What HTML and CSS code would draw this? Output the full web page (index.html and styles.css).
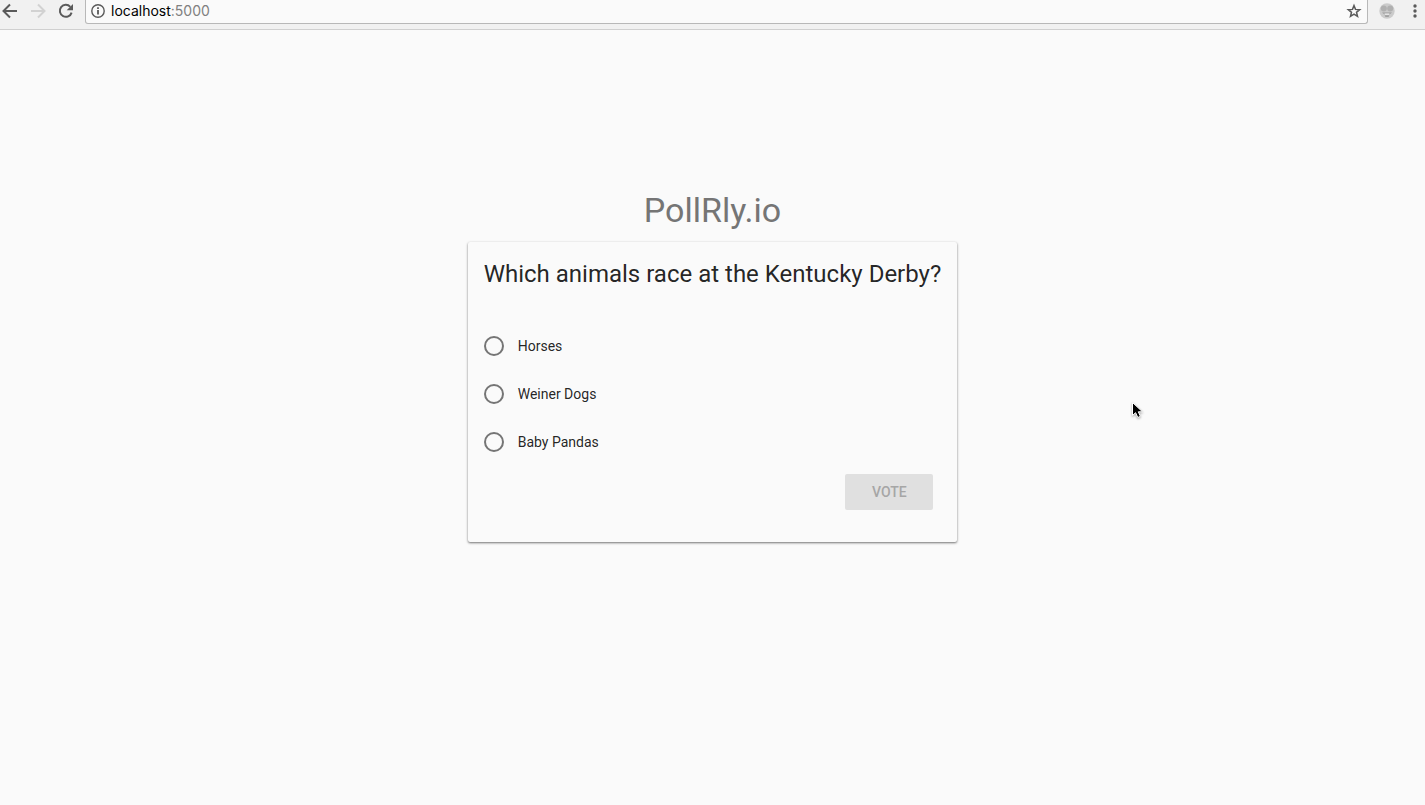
FILE: index.html
```html
<!DOCTYPE html>
<html lang="en">
<head>
<meta charset="utf-8">
<title>PollRly.io</title>
<link rel="stylesheet" href="styles.css">
</head>
<body>
<header class="toolbar">
  <div class="nav">
    <button class="icon-button" type="button" aria-label="Back">
      <svg width="16" height="16" viewBox="0 0 16 16" fill="none" stroke="#5a5a5a" stroke-width="2"><path d="M15 8H2M8 1.5 1.5 8 8 14.5"/></svg>
    </button>
    <button class="icon-button" type="button" aria-label="Forward">
      <svg width="16" height="16" viewBox="0 0 16 16" fill="none" stroke="#d2d2d2" stroke-width="2"><path d="M1 8h13M8 1.5 14.5 8 8 14.5"/></svg>
    </button>
    <button class="icon-button" type="button" aria-label="Reload">
      <svg width="16" height="16" viewBox="0 0 16 16"><path d="M13.6 9.6A6 6 0 1 1 12.3 3.8" fill="none" stroke="#5a5a5a" stroke-width="2"/><path d="M15 1v6.3H8.7z" fill="#5a5a5a"/></svg>
    </button>
  </div>
  <div class="address">
    <svg width="14" height="14" viewBox="0 0 14 14"><circle cx="7" cy="7" r="6.2" fill="none" stroke="#5a5a5a" stroke-width="1.4"/><path d="M6.1 6h1.8v4.6H6.1zM6.1 3.2h1.8v1.7H6.1z" fill="#5a5a5a"/></svg>
    <span class="url">localhost<span class="port">:5000</span></span>
    <button class="icon-button" type="button" aria-label="Bookmark">
      <svg width="16" height="16" viewBox="0 0 16 16"><path d="m8 2.6 1.5 3.8 4.2.3-3.2 2.6 1 4L8 11.1l-3.5 2.2 1-4-3.2-2.6 4.2-.3z" fill="none" stroke="#5a5a5a" stroke-width="1.5"/></svg>
    </button>
  </div>
  <div class="tools">
    <button class="icon-button" type="button" aria-label="Extension">
      <svg width="16" height="16" viewBox="0 0 16 16"><circle cx="8" cy="8" r="7.7" fill="#cbcbcb"/><circle cx="4.8" cy="5.4" r="3" fill="#b0b0b0"/><circle cx="11.2" cy="5.4" r="3" fill="#b0b0b0"/><path d="M3 9.4h10l-1.6 1.4H4.6z" fill="#999"/><path d="M5 10.4h6L9.6 14H6.4z" fill="#a0a0a0"/><path d="M5.6 10.4h4.8v1.7H5.6z" fill="#e4e4e4"/></svg>
    </button>
    <button class="icon-button" type="button" aria-label="Menu">
      <svg width="16" height="16" viewBox="0 0 16 16" fill="#5a5a5a"><circle cx="8" cy="3" r="1.7"/><circle cx="8" cy="8" r="1.7"/><circle cx="8" cy="13" r="1.7"/></svg>
    </button>
  </div>
</header>
<main class="page">
  <h1 class="brand">PollRly.io</h1>
  <form class="card">
    <fieldset class="poll">
      <legend class="question">Which animals race at the Kentucky Derby?</legend>
      <label class="option"><input class="radio" type="radio" name="animal">Horses</label>
      <label class="option"><input class="radio" type="radio" name="animal">Weiner Dogs</label>
      <label class="option"><input class="radio" type="radio" name="animal">Baby Pandas</label>
    </fieldset>
    <div class="actions"><button class="vote" type="submit" disabled>VOTE</button></div>
  </form>
</main>
<svg class="cursor" width="14" height="20" viewBox="0 0 14 20"><path d="M1.5 1.5v13l3.1-2.8 2.2 4.8 2.6-1.2-2.1-4.5h4.2z" fill="#000" stroke="#fff"/></svg>
</body>
</html>
```
FILE: styles.css
```css
* {
  box-sizing: border-box;
}

body {
  margin: 0;
  min-height: 100vh;
  background: #fafafa;
  color: rgba(0, 0, 0, 0.87);
  font-family: Roboto, sans-serif;
  font-size: 14px;
}

.toolbar {
  display: flex;
  align-items: flex-start;
  height: 30px;
  background: #f1f1f1;
  border-bottom: 1px solid #d0d0d0;
}

.nav {
  display: flex;
  gap: 12px;
  padding: 3px 11px 0 2px;
}

.icon-button {
  display: flex;
  padding: 0;
  border: 0;
  background: none;
}

.address {
  display: flex;
  flex: 1;
  align-items: center;
  gap: 6px;
  height: 24px;
  padding: 0 5px 1px;
  background: #fafafa;
  border: 1px solid #b8b8b8;
  border-top: 0;
  border-radius: 0 0 3px 3px;
}

.url {
  flex: 1;
  color: #000;
  font-family: Inter, sans-serif;
  line-height: 20px;
}

.port {
  color: #808080;
}

.tools {
  display: flex;
  gap: 12px;
  padding: 3px 2px 0 11px;
}

.page {
  display: flex;
  flex-direction: column;
  align-items: center;
  padding: 160px 16px 32px;
}

.brand {
  margin: 0 0 12px;
  color: #757575;
  font-size: 34px;
  font-weight: 400;
  line-height: 40px;
}

.card {
  padding: 16px 16px 32px;
  border-radius: 2px;
  box-shadow: 0 1px 3px rgba(0, 0, 0, 0.25), 0 1px 2px rgba(0, 0, 0, 0.35);
}

.poll {
  margin: 0;
  padding: 0;
  border: 0;
}

.question {
  margin-bottom: 32px;
  padding: 0;
  font-size: 24px;
  line-height: 32px;
}

.option {
  display: flex;
  align-items: center;
  gap: 14px;
  height: 48px;
}

.radio {
  appearance: none;
  width: 20px;
  height: 20px;
  margin: 0;
  border: 2px solid #757575;
  border-radius: 50%;
}

.radio:checked {
  background: radial-gradient(#3f51b5 5px, transparent 6px);
}

.actions {
  display: flex;
  justify-content: flex-end;
  padding: 8px 8px 0 0;
}

.vote {
  min-width: 88px;
  height: 36px;
  padding: 0 16px;
  border: 0;
  border-radius: 2px;
  background: #e0e0e0;
  color: #a6a6a6;
  font: 500 14px Roboto, sans-serif;
}

.cursor {
  position: absolute;
  top: 401px;
  left: 1131px;
  filter: drop-shadow(0 1px 1px rgba(0, 0, 0, 0.35));
}
```
